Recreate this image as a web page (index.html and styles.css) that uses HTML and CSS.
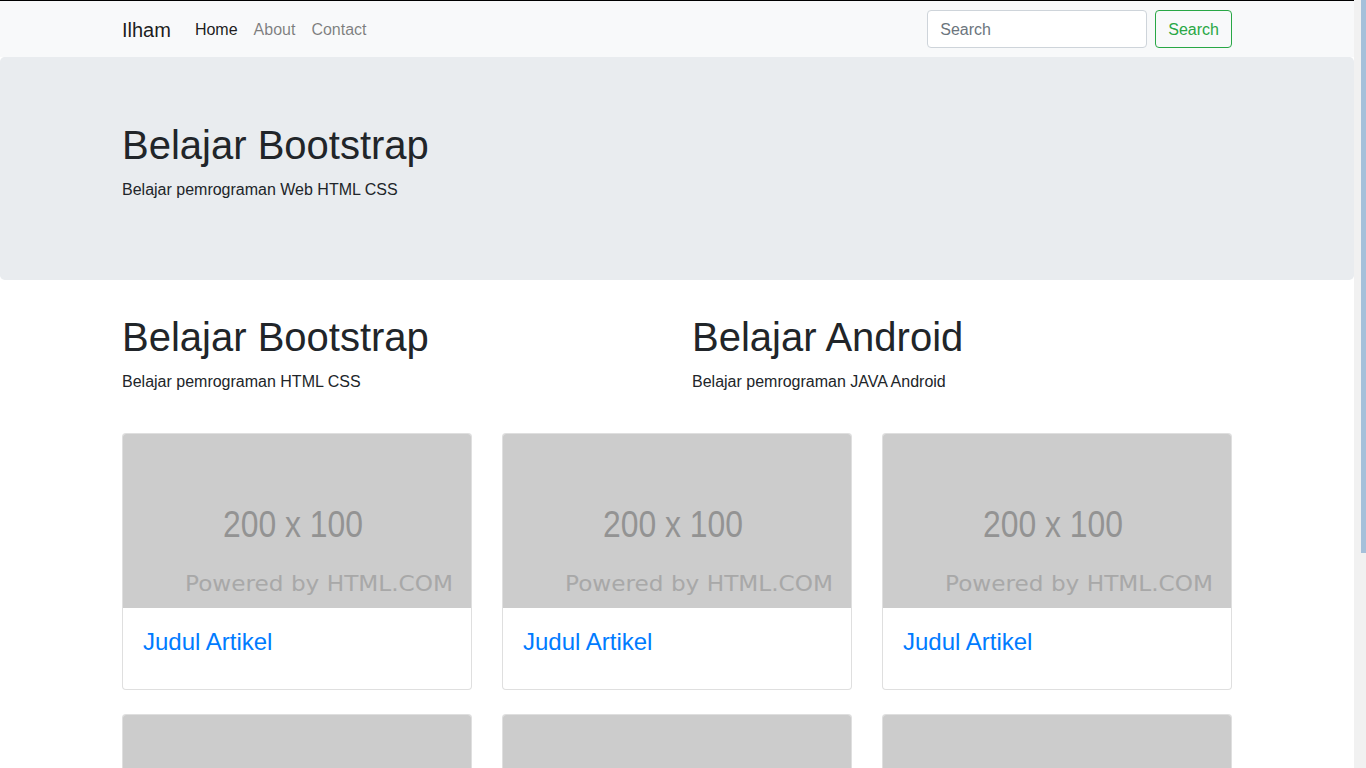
FILE: index.html
```html
<!DOCTYPE html>
<html lang="id">
<head>
<meta charset="utf-8">
<title>Belajar Bootstrap</title>
<link rel="stylesheet" href="styles.css">
</head>
<body>
<nav class="navbar">
  <div class="container nav-inner">
    <a class="brand" href="#">Ilham</a>
    <ul class="nav-links">
      <li><a class="nav-link active" href="#">Home</a></li>
      <li><a class="nav-link" href="#">About</a></li>
      <li><a class="nav-link" href="#">Contact</a></li>
    </ul>
    <form class="search-form">
      <input class="search-input" type="search" placeholder="Search">
      <button class="btn-search" type="button">Search</button>
    </form>
  </div>
</nav>

<header class="jumbotron">
  <div class="container">
    <h1 class="title">Belajar Bootstrap</h1>
    <p class="text">Belajar pemrograman Web HTML CSS</p>
  </div>
</header>

<main class="container">
  <section class="row two">
    <div class="col">
      <h1 class="title">Belajar Bootstrap</h1>
      <p class="text">Belajar pemrograman HTML CSS</p>
    </div>
    <div class="col">
      <h1 class="title">Belajar Android</h1>
      <p class="text">Belajar pemrograman JAVA Android</p>
    </div>
  </section>

  <section class="cards">
    <article class="card">
      <svg class="thumb" viewBox="0 0 348 174" preserveAspectRatio="none">
        <rect width="348" height="174" fill="#cccccc"/>
        <text x="100" y="103" textLength="140" lengthAdjust="spacingAndGlyphs" class="t1">200 x 100</text>
        <text x="62" y="157" textLength="268" lengthAdjust="spacingAndGlyphs" class="t2">Powered by HTML.COM</text>
      </svg>
      <div class="card-body"><h4 class="card-title">Judul Artikel</h4></div>
    </article>
    <article class="card">
      <svg class="thumb" viewBox="0 0 348 174" preserveAspectRatio="none">
        <rect width="348" height="174" fill="#cccccc"/>
        <text x="100" y="103" textLength="140" lengthAdjust="spacingAndGlyphs" class="t1">200 x 100</text>
        <text x="62" y="157" textLength="268" lengthAdjust="spacingAndGlyphs" class="t2">Powered by HTML.COM</text>
      </svg>
      <div class="card-body"><h4 class="card-title">Judul Artikel</h4></div>
    </article>
    <article class="card">
      <svg class="thumb" viewBox="0 0 348 174" preserveAspectRatio="none">
        <rect width="348" height="174" fill="#cccccc"/>
        <text x="100" y="103" textLength="140" lengthAdjust="spacingAndGlyphs" class="t1">200 x 100</text>
        <text x="62" y="157" textLength="268" lengthAdjust="spacingAndGlyphs" class="t2">Powered by HTML.COM</text>
      </svg>
      <div class="card-body"><h4 class="card-title">Judul Artikel</h4></div>
    </article>
    <article class="card">
      <svg class="thumb" viewBox="0 0 348 174" preserveAspectRatio="none">
        <rect width="348" height="174" fill="#cccccc"/>
        <text x="100" y="103" textLength="140" lengthAdjust="spacingAndGlyphs" class="t1">200 x 100</text>
        <text x="62" y="157" textLength="268" lengthAdjust="spacingAndGlyphs" class="t2">Powered by HTML.COM</text>
      </svg>
      <div class="card-body"><h4 class="card-title">Judul Artikel</h4></div>
    </article>
    <article class="card">
      <svg class="thumb" viewBox="0 0 348 174" preserveAspectRatio="none">
        <rect width="348" height="174" fill="#cccccc"/>
        <text x="100" y="103" textLength="140" lengthAdjust="spacingAndGlyphs" class="t1">200 x 100</text>
        <text x="62" y="157" textLength="268" lengthAdjust="spacingAndGlyphs" class="t2">Powered by HTML.COM</text>
      </svg>
      <div class="card-body"><h4 class="card-title">Judul Artikel</h4></div>
    </article>
    <article class="card">
      <svg class="thumb" viewBox="0 0 348 174" preserveAspectRatio="none">
        <rect width="348" height="174" fill="#cccccc"/>
        <text x="100" y="103" textLength="140" lengthAdjust="spacingAndGlyphs" class="t1">200 x 100</text>
        <text x="62" y="157" textLength="268" lengthAdjust="spacingAndGlyphs" class="t2">Powered by HTML.COM</text>
      </svg>
      <div class="card-body"><h4 class="card-title">Judul Artikel</h4></div>
    </article>
  </section>
</main>

<div class="scrollbar" aria-hidden="true"><div class="scroll-thumb"></div></div>
</body>
</html>
```

FILE: styles.css
```css
* { box-sizing: border-box; }

html { background: #fff; }

body {
  margin: 0 12px 0 0;
  font-family: "Liberation Sans", Arial, sans-serif;
  font-size: 16px;
  line-height: 1.5;
  color: #212529;
  background: #fff;
  padding-bottom: 72px;
}

.container {
  width: 1140px;
  margin: 0 auto;
  padding: 0 15px;
}

/* simulated window scrollbar */
.scrollbar {
  position: fixed;
  top: 0;
  right: 0;
  width: 12px;
  height: 100vh;
  background: #f1f1f1;
}
.scroll-thumb {
  margin-left: 7px;
  width: 5px;
  height: 553px;
  background: #a5c0da;
}

/* navbar */
.navbar {
  background: #f8f9fa;
  border-top: 1px solid #000;
  padding: 9px 0;
}
.nav-inner {
  display: flex;
  align-items: center;
}
.brand {
  font-size: 20px;
  line-height: 30px;
  padding-top: 1px;
  color: rgba(0,0,0,.9);
  text-decoration: none;
  margin-right: 16px;
}
.nav-links {
  display: flex;
  list-style: none;
  margin: 0;
  padding: 0;
  flex: 1;
}
.nav-link {
  display: block;
  padding: 8px 8px 6px;
  color: rgba(0,0,0,.5);
  text-decoration: none;
}
.nav-link.active { color: rgba(0,0,0,.9); }

.search-form {
  display: flex;
  align-items: center;
}
.search-input {
  width: 220px;
  height: 38px;
  padding: 7px 12px 5px;
  font: inherit;
  font-size: 16px;
  color: #495057;
  background: #fff;
  border: 1px solid #ced4da;
  border-radius: 4px;
  margin-right: 8px;
  outline: none;
}
.search-input::placeholder { color: #6c757d; }
.btn-search {
  height: 38px;
  padding: 7px 12px 5px;
  font: inherit;
  font-size: 16px;
  color: #28a745;
  background: transparent;
  border: 1px solid #28a745;
  border-radius: 4px;
}

/* jumbotron */
.jumbotron {
  background: #e9ecef;
  border-radius: 4.8px;
  padding: 64px 0 62px;
  margin-bottom: 33px;
}

.title {
  font-size: 40px;
  font-weight: 500;
  line-height: 1.2;
  margin: 0 0 9px;
}
.text { margin: 0 0 16px; }

/* two columns */
.row.two {
  display: grid;
  grid-template-columns: 1fr 1fr;
  column-gap: 30px;
}

/* cards */
.cards {
  display: grid;
  grid-template-columns: repeat(3, 350px);
  column-gap: 30px;
  row-gap: 24px;
  margin-top: 23px;
}
.card {
  border: 1px solid rgba(0,0,0,.125);
  border-radius: 4px;
  overflow: hidden;
  background: #fff;
}
.thumb {
  display: block;
  width: 348px;
  height: 174px;
}
.t1 {
  font-family: "Liberation Sans", Arial, sans-serif;
  font-size: 37px;
  fill: #939393;
}
.t2 {
  font-family: "DejaVu Sans", sans-serif;
  font-size: 22px;
  fill: #a8a8a8;
}
.card-body { padding: 20px; }
.card-title {
  margin: 0 0 12px;
  font-size: 24px;
  font-weight: 500;
  line-height: 1.2;
  color: #007bff;
}
```
